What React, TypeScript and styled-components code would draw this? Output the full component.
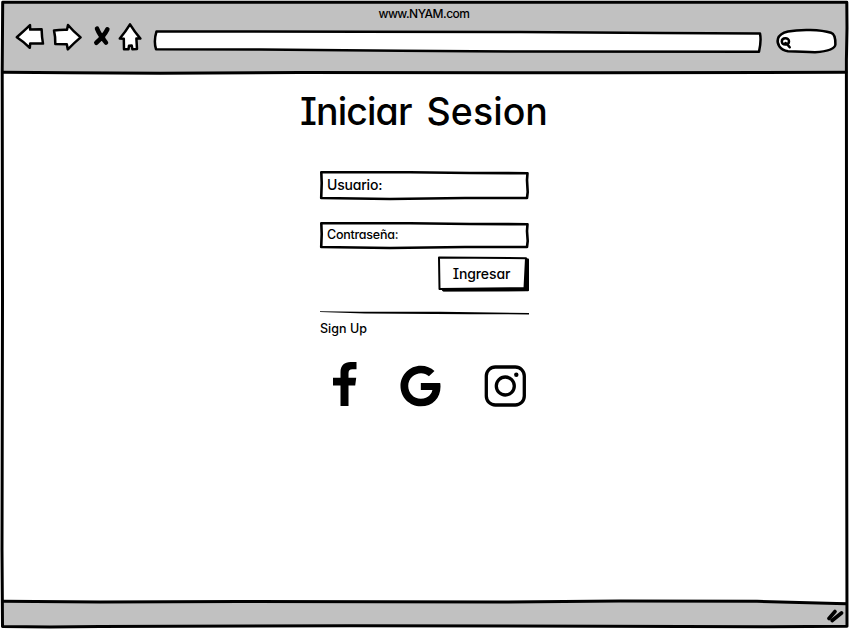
import React from 'react';
import styled, { createGlobalStyle } from 'styled-components';
import { FaGoogle } from 'react-icons/fa';

const GlobalStyle = createGlobalStyle`
  * { box-sizing: border-box; }
  body { margin: 0; background: #fff; overflow: hidden; }
`;

const Window = styled.div`
  position: relative;
  width: 849px;
  height: 629px;
  padding: 2px 3px 2px 2px;
  display: grid;
  grid-template-rows: 71px 1fr 25px;
  background: #fff;
  color: #000;
  font-family: Inter, 'Open Sans', sans-serif;
  font-feature-settings: 'cv08', 'cv11';
`;

const Outline = styled.svg<{ $stroke?: number }>`
  position: absolute;
  inset: 0;
  width: 100%;
  height: 100%;
  overflow: visible;
  fill: none;
  stroke: #000;
  stroke-width: ${p => p.$stroke ?? 3};
  stroke-linejoin: round;
  stroke-linecap: round;
  pointer-events: none;
`;

const Header = styled.header`
  background: #c1c1c1;
  display: flex;
  flex-direction: column;
`;

const Label = styled.span<{ $size: number; $spacing?: number }>`
  position: relative;
  font-size: ${p => p.$size}px;
  font-weight: 500;
  letter-spacing: ${p => p.$spacing ?? 0}px;
  line-height: 16px;
  white-space: nowrap;
`;

const Address = styled.div`
  height: 20px;
  padding-top: 4px;
  display: flex;
  justify-content: center;
`;

const Toolbar = styled.nav`
  height: 30px;
  padding-left: 13px;
  display: flex;
`;

const Sketch = styled.svg<{ $w: number; $gap?: number; $stroke?: number }>`
  width: ${p => p.$w}px;
  height: 30px;
  margin-right: ${p => p.$gap ?? 0}px;
  flex: none;
  overflow: visible;
  fill: #fff;
  stroke: #000;
  stroke-width: ${p => p.$stroke ?? 2.5};
  stroke-linejoin: round;
  stroke-linecap: round;
`;

const Main = styled.main`
  display: flex;
  flex-direction: column;
  align-items: center;
  padding-top: 14px;
`;

const Title = styled.h1`
  margin: 0;
  height: 50px;
  font-size: 37.5px;
  line-height: 50px;
  font-weight: 500;
  letter-spacing: 0.05px;
  word-spacing: 5px;
  white-space: nowrap;
`;

const TightWord = styled.span`
  letter-spacing: -0.9px;
`;

const Form = styled.form`
  width: 209px;
  margin-top: 34px;
  display: flex;
  flex-direction: column;
`;

const Field = styled.label<{ $h: number; $gap: number }>`
  position: relative;
  height: ${p => p.$h}px;
  margin-bottom: ${p => p.$gap}px;
  padding: 0 0 2px 7.5px;
  display: flex;
  align-items: center;
`;

const Submit = styled.button`
  position: relative;
  align-self: flex-end;
  width: 91px;
  height: 36px;
  padding: 0 3px 3px 0;
  border: 0;
  background: none;
  color: inherit;
  font: inherit;
  font-feature-settings: inherit;
`;

const Divider = styled.svg`
  width: 209px;
  height: 5px;
  margin-top: 19px;
  display: block;
`;

const SignUp = styled.a`
  margin-top: 5px;
  padding-left: 0.5px;
  height: 16px;
  display: flex;
`;

const Socials = styled.div`
  height: 46px;
  margin-top: 24px;
  padding: 0 3px 0 13px;
  display: flex;
  justify-content: space-between;
  align-items: flex-end;
`;

const SocialIcon = styled.svg<{ $w: number; $h: number }>`
  width: ${p => p.$w}px;
  height: ${p => p.$h}px;
  overflow: visible;
`;

const GoogleIcon = styled(FaGoogle)`
  width: 41px;
  height: 42px;
  margin-left: 1px;
`;

const Footer = styled.footer`
  background: #c1c1c1;
  display: flex;
  justify-content: flex-end;
  padding: 6px 2px 0 0;
`;

const Grip = styled.svg`
  width: 18px;
  height: 16px;
  fill: none;
  stroke: #000;
  stroke-width: 3.6;
  stroke-linecap: round;
`;

function FieldOutline({ h }: { h: number }) {
  return (
    <Outline viewBox={`0 0 209 ${h}`} $stroke={2.6}>
      <path d={`M1.3 1.3L90 1.3L150 2L207.5 2.2L207 9L207.7 ${h - 8}L207 ${h - 2}L145 ${h - 2}L70 ${h - 1}L1.2 ${h - 2}L1.7 12Z`} />
    </Outline>
  );
}

export default function App() {
  return (
    <>
      <GlobalStyle />
      <Window>
        <Header>
          <Address><Label $size={12} $spacing={-0.5}>www.NYAM.com</Label></Address>
          <Toolbar>
            <Sketch $w={30} $gap={7} viewBox="15 22 30 30">
              <path d="M16.8 37.3Q24 31 30 25.2L30.2 29.6L41.6 29.3Q41.8 37 43 43.6L30.2 43.4L29.8 47.8Q24 42 16.8 37.3Z" />
            </Sketch>
            <Sketch $w={30} $gap={11} viewBox="52 22 30 30">
              <path d="M54 30.4Q60 29.5 67 29.7L68 25Q73 31 80.6 37.4Q74 43 67.8 49.4L66.8 44.2L55.3 44Q55.5 37 54 30.4Z" />
            </Sketch>
            <Sketch $w={18} $gap={7} $stroke={4.5} viewBox="93 22 18 30">
              <path d="M97 28.7Q99.5 35 106 42.6M107.4 29.3Q104.5 35.5 96.3 42.8" fill="none" />
              <path d="M99.8 33L104.8 34L105.3 38.5L99.5 39Z" fill="#000" stroke="none" />
            </Sketch>
            <Sketch $w={24} $gap={11} viewBox="118 22 24 30">
              <path d="M130 24.4Q134 31 140.4 38.6L136.4 38.6L137 48.9L132.4 49.3L131.7 45.5L129 45.8L128.5 49.2L124 49.2L123.8 38.7L119.8 38.5Q126 31 130 24.4Z" />
            </Sketch>
            <Sketch $w={609} $gap={14} viewBox="153 22 609 30">
              <path d="M156.5 31.4L360 31.8L520 32L660 33L760 33.5Q761.5 41 759 51.7L520 51.5L400 50.7L260 49.5L156 49.2Q153.5 41 156.5 31.4Z" />
            </Sketch>
            <Sketch $w={61} viewBox="776 22 61 30">
              <path d="M788 31.5C800 29 821 29.5 831 32.7C835 34 835.5 41 835.4 44.5C835 50 825 51.5 815 52.2C804 52 799 51.2 788 51.2C780 50 776.5 44 778 38.7C779 35 783 32.7 788 31.5Z" />
              <path d="M789 41.3C789 37.2 781.8 37.4 781.8 41.6C782.3 45.6 789 45.5 789 41.3ZM785.4 43L787.5 44.6L789.7 47.2" />
            </Sketch>
          </Toolbar>
        </Header>

        <Main>
          <Title><TightWord>Iniciar</TightWord> Sesion</Title>
          <Form onSubmit={e => e.preventDefault()}>
            <Field $h={29} $gap={22}>
              <FieldOutline h={29} />
              <Label $size={14} $spacing={-0.2}>Usuario:</Label>
            </Field>
            <Field $h={27} $gap={7}>
              <FieldOutline h={27} />
              <Label $size={12.5} $spacing={-0.25}>Contraseña:</Label>
            </Field>
            <Submit type="submit">
              <Outline viewBox="0 0 91 36" $stroke={2}>
                <path d="M5.5 34.3L90 34.3L90 3.5L87.5 3L87.5 32.5Z" fill="#000" />
                <path d="M1 1.4L88 2.2L86.5 32.2L1.5 33Z" fill="#fff" />
                <path d="M5.5 33.9L89 33.6" strokeWidth="3" />
              </Outline>
              <Label $size={14} $spacing={-0.1}>Ingresar</Label>
            </Submit>
            <Divider viewBox="0 0 209 5">
              <path d="M0 .2L40 .7L120 .8L209 2L209 3.4L150 3.2L45 2.6L0 1Z" />
            </Divider>
            <SignUp><Label $size={12.5} $spacing={0.05}>Sign Up</Label></SignUp>
            <Socials>
              <SocialIcon $w={24} $h={45} viewBox="0 0 24 45">
                <path d="M7.5 44V23.5H0V15.7H7.5V10C7.5 3.5 11.5 0 17.5 0H23.5V7.3H19.5C16.5 7.3 15.5 8.8 15.5 11.2V15.7H23.2L22.2 23.5H15.5V44Z" />
              </SocialIcon>
              <GoogleIcon />
              <SocialIcon $w={42} $h={42} viewBox="0 0 42 42" fill="none" stroke="#000" strokeWidth="3.3">
                <rect x="2.3" y="2" width="38" height="38" rx="9" />
                <circle cx="21.3" cy="21" r="9" />
                <circle cx="32.3" cy="9.8" r="2.2" fill="#000" stroke="none" />
              </SocialIcon>
            </Socials>
          </Form>
        </Main>

        <Footer>
          <Grip viewBox="0 0 18 16">
            <path d="M3 10.5L9 3.5M6.2 12.5L15.5 5" />
          </Grip>
        </Footer>

        <Outline viewBox="0 0 849 629">
          <path d="M2.7 2.2L400 2.2L846.8 2.3L847 28L846.4 60L846.6 400L847 626.2L770 626.8L600 626.3L350 625.8L100 626.5L50 627L2.5 626.5L2 550L2.5 300L2.2 70Z" />
          <path d="M3 72.2L70 72.8L160 73.2L300 72.6L600 72.8L846 72.2M3 601.2L100 602L240 601.5L500 602L620 601L757 601.3L846 603.8" />
        </Outline>
      </Window>
    </>
  );
}
